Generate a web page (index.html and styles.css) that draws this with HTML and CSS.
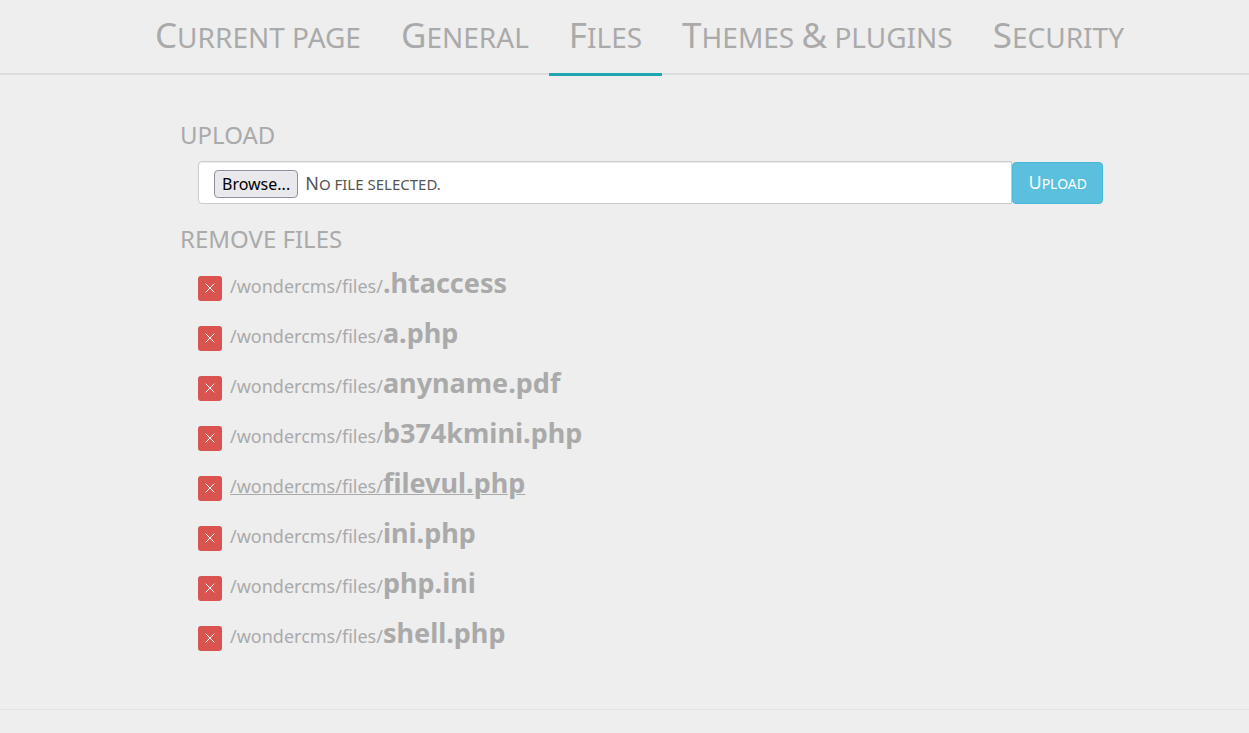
FILE: index.html
```html
<!DOCTYPE html>
<html lang="en">
<head>
<meta charset="utf-8">
<title>Files</title>
<link rel="stylesheet" href="styles.css">
</head>
<body>
<nav class="tabs">
  <a class="tab" href="#current">Current page</a>
  <a class="tab" href="#general">General</a>
  <a class="tab tab-active" href="#files" aria-current="page">Files</a>
  <a class="tab" href="#themes">Themes <span class="cap">&amp;</span> plugins</a>
  <a class="tab" href="#security">Security</a>
</nav>
<main class="panel">
  <h2 class="title">Upload</h2>
  <form class="upload">
    <label class="picker">
      <input class="picker-input" type="file">
      <span class="browse">Browse...</span>
      <span class="picker-text">No file selected.</span>
    </label>
    <button class="submit" type="button">Upload</button>
  </form>
  <h2 class="title">Remove files</h2>
  <ul class="files">
    <li class="file"><button class="remove" type="button" aria-label="Remove .htaccess"><svg class="cross" viewBox="0 0 10 10"><path d="M.7.7 9.3 9.3M9.3.7.7 9.3"/></svg></button><a class="link" href="#f1">/wondercms/files/<b class="name">.htaccess</b></a></li>
    <li class="file"><button class="remove" type="button" aria-label="Remove a.php"><svg class="cross" viewBox="0 0 10 10"><path d="M.7.7 9.3 9.3M9.3.7.7 9.3"/></svg></button><a class="link" href="#f2">/wondercms/files/<b class="name">a.php</b></a></li>
    <li class="file"><button class="remove" type="button" aria-label="Remove anyname.pdf"><svg class="cross" viewBox="0 0 10 10"><path d="M.7.7 9.3 9.3M9.3.7.7 9.3"/></svg></button><a class="link" href="#f3">/wondercms/files/<b class="name">anyname.pdf</b></a></li>
    <li class="file"><button class="remove" type="button" aria-label="Remove b374kmini.php"><svg class="cross" viewBox="0 0 10 10"><path d="M.7.7 9.3 9.3M9.3.7.7 9.3"/></svg></button><a class="link" href="#f4">/wondercms/files/<b class="name">b374kmini.php</b></a></li>
    <li class="file"><button class="remove" type="button" aria-label="Remove filevul.php"><svg class="cross" viewBox="0 0 10 10"><path d="M.7.7 9.3 9.3M9.3.7.7 9.3"/></svg></button><a class="link link-hover" href="#f5">/wondercms/files/<b class="name">filevul.php</b></a></li>
    <li class="file"><button class="remove" type="button" aria-label="Remove ini.php"><svg class="cross" viewBox="0 0 10 10"><path d="M.7.7 9.3 9.3M9.3.7.7 9.3"/></svg></button><a class="link" href="#f6">/wondercms/files/<b class="name">ini.php</b></a></li>
    <li class="file"><button class="remove" type="button" aria-label="Remove php.ini"><svg class="cross" viewBox="0 0 10 10"><path d="M.7.7 9.3 9.3M9.3.7.7 9.3"/></svg></button><a class="link" href="#f7">/wondercms/files/<b class="name">php.ini</b></a></li>
    <li class="file"><button class="remove" type="button" aria-label="Remove shell.php"><svg class="cross" viewBox="0 0 10 10"><path d="M.7.7 9.3 9.3M9.3.7.7 9.3"/></svg></button><a class="link" href="#f8">/wondercms/files/<b class="name">shell.php</b></a></li>
  </ul>
</main>
<footer class="footer"></footer>
</body>
</html>
```

FILE: styles.css
```css
* { box-sizing: border-box; }
body {
  margin: 0;
  background: #eee;
  color: #aaa;
  font-family: "Lucida Sans Unicode", "Noto Sans", sans-serif;
  font-size: 18px;
}
.tabs {
  display: flex;
  justify-content: center;
  height: 75px;
  padding-left: 30px;
  border-bottom: 2px solid #ddd;
}
.tab {
  display: block;
  height: 76px;
  padding: 0 20px;
  border-bottom: 3px solid transparent;
  color: #aaa;
  font-size: 28px;
  line-height: 70px;
  text-decoration: none;
  text-transform: uppercase;
  white-space: nowrap;
}
.tab::first-letter, .cap { font-size: 35px; }
.tab-active { border-bottom-color: #1fa6b0; }
.panel {
  max-width: 957px;
  margin: 0 auto;
  padding: 45px 0 50px 34px;
}
.title {
  margin: 0;
  font-size: 24px;
  font-weight: 400;
  line-height: 30px;
  text-transform: uppercase;
}
.upload {
  display: flex;
  align-items: flex-end;
  margin: 11px 0 20px 18px;
}
.picker {
  display: flex;
  flex: 1;
  align-items: center;
  gap: 7px;
  height: 43px;
  padding: 2px 15px 0;
  background: #fff;
  border: 1px solid #ccc;
  border-radius: 4px 0 0 4px;
  box-shadow: inset 0 1px 1px rgba(0, 0, 0, .075);
  color: #555;
}
.picker-input {
  position: absolute;
  width: 1px;
  height: 1px;
  opacity: 0;
}
.browse {
  height: 28px;
  padding: 0 7px;
  background: #e9e9ed;
  border: 1px solid #8f8f9d;
  border-radius: 4px;
  color: #000;
  font-family: Tahoma, "Noto Sans", sans-serif;
  font-size: 16px;
  line-height: 26px;
}
.picker-text {
  display: block;
  font-size: 15px;
  line-height: 28px;
  text-transform: uppercase;
}
.picker-text::first-letter { font-size: 18px; }
.submit {
  display: block;
  height: 42px;
  padding: 0 15px;
  background: #5bc0de;
  border: 1px solid #46b8da;
  border-radius: 4px;
  color: #fff;
  font-family: inherit;
  font-size: 14px;
  line-height: 38px;
  text-transform: uppercase;
}
.submit::first-letter { font-size: 18px; }
.files {
  margin: 5px 0 0 18px;
  padding: 0;
  list-style: none;
}
.file {
  display: flex;
  align-items: center;
  gap: 8px;
  height: 50px;
}
.remove {
  display: grid;
  place-items: center;
  width: 24px;
  height: 25px;
  margin-top: 8px;
  padding: 0;
  background: #d9534f;
  border: 0;
  border-radius: 3px;
}
.cross {
  width: 10px;
  height: 10px;
  fill: none;
  stroke: #fff;
}
.link {
  color: #aaa;
  line-height: 40px;
  text-decoration: none;
}
.link-hover, .link:hover { text-decoration: underline; }
.name { font-size: 27px; }
.footer {
  height: 24px;
  border-top: 1px solid #e2e2e2;
}
```
